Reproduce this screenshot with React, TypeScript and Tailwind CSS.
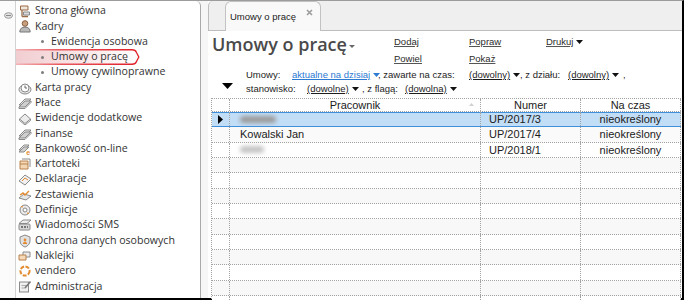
import React from "react";

type IconName =
  | "home"
  | "person"
  | "clock"
  | "bills"
  | "book"
  | "ebank"
  | "boxes"
  | "paper"
  | "chart"
  | "gear"
  | "sms"
  | "shield"
  | "stickers"
  | "vendero"
  | "admin";

type NavItem = { label: string; icon?: IconName; sub?: boolean; active?: boolean };

const NAV: NavItem[] = [
  { label: "Strona główna", icon: "home" },
  { label: "Kadry", icon: "person" },
  { label: "Ewidencja osobowa", sub: true },
  { label: "Umowy o pracę", sub: true, active: true },
  { label: "Umowy cywilnoprawne", sub: true },
  { label: "Karta pracy", icon: "clock" },
  { label: "Płace", icon: "bills" },
  { label: "Ewidencje dodatkowe", icon: "book" },
  { label: "Finanse", icon: "bills" },
  { label: "Bankowość on-line", icon: "ebank" },
  { label: "Kartoteki", icon: "boxes" },
  { label: "Deklaracje", icon: "paper" },
  { label: "Zestawienia", icon: "chart" },
  { label: "Definicje", icon: "gear" },
  { label: "Wiadomości SMS", icon: "sms" },
  { label: "Ochrona danych osobowych", icon: "shield" },
  { label: "Naklejki", icon: "stickers" },
  { label: "vendero", icon: "vendero" },
  { label: "Administracja", icon: "admin" },
];

type Row = { name?: string; blur?: number; numer: string; czas: string; selected?: boolean };

const ROWS: Row[] = [
  { blur: 36, numer: "UP/2017/3", czas: "nieokreślony", selected: true },
  { name: "Kowalski Jan", numer: "UP/2017/4", czas: "nieokreślony" },
  { blur: 24, numer: "UP/2018/1", czas: "nieokreślony" },
];

const EMPTY_ROWS = 10;

// small greyish module icons, drawn roughly like the desktop app ones
function NavIcon({ name }: { name: IconName }) {
  const g = "#8a8a8a";
  const f = "#dcdcdc";
  const o = "#e38b2f";
  switch (name) {
    case "home":
      return (
        <svg width="14" height="14" viewBox="0 0 14 14">
          <path d="M2.5 2h7.5v4H2.5z" fill="#efe6dc" stroke="#9b6b47" />
          <path d="M4 6v6.5M4 12.5h6" stroke="#9b6b47" strokeWidth="1.3" fill="none" />
          <path d="M5.5 8h6v3h-6z" fill={f} stroke={g} />
        </svg>
      );
    case "person":
      return (
        <svg width="14" height="14" viewBox="0 0 14 14">
          <circle cx="7" cy="4.5" r="2.8" fill="#c9a07e" stroke="#8a5f40" />
          <path d="M1.8 13c0-3.3 2.2-5 5.2-5s5.2 1.7 5.2 5z" fill="#b9b9b9" stroke="#777" />
        </svg>
      );
    case "clock":
      return (
        <svg width="14" height="14" viewBox="0 0 14 14">
          <ellipse cx="7" cy="8.5" rx="6" ry="4.5" fill="#e6e6e6" stroke={g} />
          <circle cx="7" cy="7" r="4" fill="#fff" stroke={g} />
          <path d="M7 4.5V7h2" stroke="#666" fill="none" />
        </svg>
      );
    case "bills":
      return (
        <svg width="14" height="14" viewBox="0 0 14 14">
          <path d="M1 9l6-6h6l-6 6z" fill="#e4e4e4" stroke={g} />
          <path d="M1 11l6-6h6l-6 6z" fill="#cfcfcf" stroke={g} />
          <path d="M1 11v1.5h6l6-6V5" fill="none" stroke={g} />
        </svg>
      );
    case "book":
      return (
        <svg width="14" height="14" viewBox="0 0 14 14">
          <path d="M1.5 8L7 3l5.5 5L7 12.5z" fill="#ececec" stroke={g} />
          <path d="M1.5 8v1.5L7 14l5.5-4.5V8" fill="none" stroke={g} />
        </svg>
      );
    case "ebank":
      return (
        <svg width="14" height="14" viewBox="0 0 14 14">
          <path d="M1 8l5-5h5l-5 5z" fill="#e4e4e4" stroke={g} />
          <path d="M1 10l5-5h5l-5 5z" fill="#cfcfcf" stroke={g} />
          <circle cx="10.5" cy="10.5" r="3" fill="#fff" />
          <text x="8.3" y="13" fontSize="7" fontWeight="700" fill={o} fontFamily="Arial">e</text>
        </svg>
      );
    case "boxes":
      return (
        <svg width="14" height="14" viewBox="0 0 14 14">
          <path d="M2 4h8v8H2z" fill="#f3d6b4" stroke="#b9824e" />
          <path d="M4 2h8v8" fill="none" stroke={g} />
          <path d="M2 7h8" stroke="#b9824e" />
        </svg>
      );
    case "paper":
      return (
        <svg width="14" height="14" viewBox="0 0 14 14">
          <path d="M1 9l6-6 6 4-6 6z" fill="#f1f1f1" stroke={g} />
          <path d="M4 9l3-3 3 2" fill="none" stroke={o} />
        </svg>
      );
    case "chart":
      return (
        <svg width="14" height="14" viewBox="0 0 14 14">
          <path d="M1 10l5-4 7 2-5 4z" fill="#e6e6e6" stroke={g} />
          <path d="M2 7l3-2 2 2 4-4" fill="none" stroke={o} strokeWidth="1.4" />
        </svg>
      );
    case "gear":
      return (
        <svg width="14" height="14" viewBox="0 0 14 14">
          <circle cx="7" cy="7" r="5" fill="#ececec" stroke={g} />
          <circle cx="7" cy="7" r="2" fill="#fff" stroke={g} />
          <path d="M3 3.5l2 .5M11 10.5l-2-.5" stroke={o} strokeWidth="1.2" />
        </svg>
      );
    case "sms":
      return (
        <svg width="14" height="14" viewBox="0 0 14 14">
          <path d="M1 5.5L5 2h8L9 5.5z" fill="#ededed" stroke={g} />
          <rect x="1" y="6" width="11" height="6" rx="1" fill="#d7d7d7" stroke={g} />
          <path d="M3 9h7" stroke="#555" strokeWidth="1.5" strokeDasharray="2 1" />
        </svg>
      );
    case "shield":
      return (
        <svg width="14" height="14" viewBox="0 0 14 14">
          <path d="M7 1l5 2v4c0 3-2.5 5.3-5 6-2.5-.7-5-3-5-6V3z" fill="#e2e2e2" stroke={g} />
          <circle cx="7" cy="6" r="1.4" fill={o} />
          <path d="M4.8 10c.3-1.5 1.1-2.3 2.2-2.3s1.9.8 2.2 2.3z" fill={o} />
        </svg>
      );
    case "stickers":
      return (
        <svg width="14" height="14" viewBox="0 0 14 14">
          <path d="M5 3h7v5H5z" fill="#ececec" stroke={g} />
          <path d="M1 6h7v5H1z" fill="#f6d9b8" stroke="#b9824e" />
        </svg>
      );
    case "vendero":
      return (
        <svg width="14" height="14" viewBox="0 0 14 14">
          <circle cx="7" cy="7" r="4.6" fill="none" stroke={o} strokeWidth="2" strokeDasharray="4 1.4" />
        </svg>
      );
    case "admin":
      return (
        <svg width="14" height="14" viewBox="0 0 14 14">
          <rect x="1.5" y="3" width="9" height="10" fill="#f0f0f0" stroke={g} />
          <path d="M3.5 6.5h5M3.5 9h4" stroke="#aaa" />
          <path d="M7 9l5.5-6.5" stroke="#777" strokeWidth="1.6" />
        </svg>
      );
  }
}

function Caret({ color = "#111" }: { color?: string }) {
  return (
    <svg width="7" height="4" viewBox="0 0 7 4" className="inline-block ml-[3px] mb-[1px]">
      <path d="M0 0h7L3.5 4z" fill={color} />
    </svg>
  );
}

function ActiveMarker() {
  return (
    <svg width="124" height="16" viewBox="0 0 124 16" className="absolute left-0 top-[-0.5px] pointer-events-none">
      <defs>
        <linearGradient id="hlFill" x1="0" x2="1" y1="0" y2="0">
          <stop offset="0" stopColor="#f1cdd0" />
          <stop offset="0.6" stopColor="#fae9ea" />
          <stop offset="1" stopColor="#ffffff" />
        </linearGradient>
        <linearGradient id="hlStroke" x1="0" x2="1" y1="0" y2="0">
          <stop offset="0" stopColor="#f2b4b8" />
          <stop offset="0.35" stopColor="#e8595f" />
          <stop offset="1" stopColor="#e01e26" />
        </linearGradient>
      </defs>
      <path
        d="M0 0.75H116Q119.5 0.75 120.5 3.5L122.8 8L120.5 12.5Q119.5 15.25 116 15.25H0"
        fill="url(#hlFill)"
        stroke="url(#hlStroke)"
        strokeWidth="1.3"
      />
    </svg>
  );
}

function Sidebar() {
  return (
    <aside className="w-[201px] h-full flex bg-white border-r border-[#a9a9a9] rounded-tr-[5px] font-['Open_Sans',sans-serif] text-[10.6px] text-[#333]">
      {/* left pin strip */}
      <div className="w-[16px] border-r border-[#d2d2d2] bg-[#fbfbfb] pt-[11px] pl-[4px]">
        <svg width="9" height="7" viewBox="0 0 9 7">
          <ellipse cx="4.5" cy="3.5" rx="4" ry="2.8" fill="#e2e2e2" stroke="#9a9a9a" />
          <path d="M2 3.5h5" stroke="#888" />
        </svg>
      </div>
      <ul className="flex-1 flex flex-col pt-[2.5px]">
        {NAV.map((item) => (
          <li
            key={item.label}
            className={`relative h-[15.3px] flex items-center whitespace-nowrap ${item.sub ? "pl-[25px]" : "pl-[2px]"}`}
          >
            {item.active && <ActiveMarker />}
            {item.sub ? (
              <>
                <span className="relative w-[3px] h-[3px] rounded-full bg-[#7d7d7d]" />
                <span className="relative ml-[7px]">{item.label}</span>
              </>
            ) : (
              <>
                <span className="w-[14px] h-[14px] flex">{item.icon && <NavIcon name={item.icon} />}</span>
                <span className="ml-[3px]">{item.label}</span>
              </>
            )}
          </li>
        ))}
      </ul>
    </aside>
  );
}

function ActionLink({ children }: { children: React.ReactNode }) {
  return <span className="underline underline-offset-[1px] decoration-[#555] text-[#2b2b2b]">{children}</span>;
}

function FilterLink({ children, blue }: { children: React.ReactNode; blue?: boolean }) {
  return (
    <span className={`whitespace-nowrap ${blue ? "text-[#2d7ad3]" : "text-[#1d1d1d]"}`}>
      <span className="underline underline-offset-[1px]">{children}</span>
      <Caret color={blue ? "#2d7ad3" : "#111"} />
    </span>
  );
}

const COLS = "grid grid-cols-[18px_251px_100px_100px]";
const CELL = "border-r border-dotted border-[#a3a3a3]";

function DataTable() {
  return (
    <div className="ml-[-1px] w-[470px] border-l border-t border-dotted border-[#a3a3a3] font-['Liberation_Sans',Arial,sans-serif] text-[11px] text-[#1b1b1b]">
      <div className={`${COLS} h-[13px] leading-[12px] border-b border-dotted border-[#a3a3a3]`}>
        <div className={CELL} />
        <div className={`${CELL} relative text-center`}>
          Pracownik
          <svg width="5" height="3" viewBox="0 0 5 3" className="absolute right-[6px] top-[4px]">
            <path d="M0 3L2.5 0 5 3z" fill="#d0d0d0" />
          </svg>
        </div>
        <div className={`${CELL} text-center`}>Numer</div>
        <div className={`${CELL} text-center`}>Na czas</div>
      </div>
      {ROWS.map((r, i) => (
        <div
          key={r.numer}
          className={`${COLS} h-[15.33px] leading-[14px] ${
            r.selected
              ? "bg-[#c2ddf6] border-b border-[#3f8fdb] shadow-[inset_0_1px_0_#3f8fdb]"
              : `border-b border-dotted border-[#a3a3a3] ${i % 2 ? "bg-[#fafafa]" : "bg-white"}`
          }`}
        >
          <div className={`${CELL} flex items-center pl-[6px]`}>
            {r.selected && (
              <svg width="5" height="9" viewBox="0 0 5 9">
                <path d="M0 0l5 4.5L0 9z" fill="#000" />
              </svg>
            )}
          </div>
          <div className={`${CELL} flex items-center pl-[10px]`}>
            {r.name ? (
              r.name
            ) : (
              <span
                className={`h-[7px] rounded-full blur-[2px] ${r.blur && r.blur > 30 ? "bg-[#9a9a9a]" : "bg-[#c4c4c4]"}`}
                style={{ width: r.blur }}
              />
            )}
          </div>
          <div className={`${CELL} pl-[8px]`}>{r.numer}</div>
          <div className={`${CELL} text-center`}>{r.czas}</div>
        </div>
      ))}
      {Array.from({ length: EMPTY_ROWS }).map((_, i) => (
        <div
          key={i}
          className={`${COLS} h-[15.33px] border-b border-dotted border-[#a3a3a3] ${(i + ROWS.length) % 2 ? "bg-[#f8f8f8]" : "bg-white"}`}
        >
          <div className={CELL} />
          <div className={CELL} />
          <div className={CELL} />
          <div className={CELL} />
        </div>
      ))}
    </div>
  );
}

function Main() {
  return (
    <section className="flex-1 flex flex-col bg-white min-w-0">
      {/* TAB STRIP */}
      <div className="h-[32px] flex items-end pl-[16px] bg-[#efefef] border-b border-l border-[#bdbdbd] rounded-tl-[5px] font-['Liberation_Sans',Arial,sans-serif]">
        <div className="h-[30px] w-[96px] mb-[-1px] flex items-start pl-[4px] pr-[7px] bg-[#f9f9f9] border border-b-0 border-[#c2c2c2] rounded-t-[6px]">
          <span className="mt-[9px] text-[9.5px] leading-[12px] text-[#222]">Umowy o pracę</span>
          <svg width="7" height="7" viewBox="0 0 7 7" className="ml-auto mt-[7px]">
            <path d="M1 1l5 5M6 1L1 6" stroke="#9a9a9a" strokeWidth="1.5" />
          </svg>
        </div>
      </div>

      <div className="flex-1 flex flex-col pl-[4px]">
        {/* TITLE + ACTIONS */}
        <div className="h-[37px] flex pt-[2px] font-['Liberation_Sans',Arial,sans-serif] text-[9.5px]">
          <div className="w-[182px] flex items-center h-[22px]">
            <span className="font-['Open_Sans',sans-serif] font-semibold text-[18px] leading-[22px] text-[#4a4a4a] whitespace-nowrap">
              Umowy o pracę
            </span>
            <svg width="6" height="3" viewBox="0 0 6 3" className="ml-[2px] mt-[4px]">
              <path d="M0 0h6L3 3z" fill="#666" />
            </svg>
          </div>
          <div className="grid grid-cols-[75px_77px_60px] leading-[14px] pt-[2px]">
            <ActionLink>Dodaj</ActionLink>
            <ActionLink>Popraw</ActionLink>
            <span className="whitespace-nowrap">
              <ActionLink>Drukuj</ActionLink>
              <Caret />
            </span>
            <ActionLink>Powiel</ActionLink>
            <ActionLink>Pokaż</ActionLink>
            <span />
          </div>
        </div>

        {/* FILTERS */}
        <div className="h-[30px] flex font-['Liberation_Sans',Arial,sans-serif] text-[9.5px] leading-[14px] text-[#1d1d1d]">
          <div className="w-[34px] pl-[10px] pt-[15px]">
            <svg width="11" height="6" viewBox="0 0 11 6">
              <path d="M0 0h11L5.5 6z" fill="#000" />
            </svg>
          </div>
          <div className="flex flex-col">
            <div className="flex whitespace-nowrap">
              <span className="w-[46px]">Umowy:</span>
              <span className="w-[86px]">
                <FilterLink blue>aktualne na dzisiaj</FilterLink>
              </span>
              <span className="w-[91px]">, zawarte na czas:</span>
              <span className="w-[51px]">
                <FilterLink>(dowolny)</FilterLink>
              </span>
              <span className="w-[48px]">, z działu:</span>
              <span className="w-[55px]">
                <FilterLink>(dowolny)</FilterLink>
              </span>
              <span>,</span>
            </div>
            <div className="flex whitespace-nowrap">
              <span className="w-[61px]">stanowisko:</span>
              <span className="w-[55px]">
                <FilterLink>(dowolne)</FilterLink>
              </span>
              <span className="w-[43px]">, z flagą:</span>
              <FilterLink>(dowolna)</FilterLink>
            </div>
          </div>
        </div>

        <DataTable />
      </div>
    </section>
  );
}

export default function App() {
  return (
    <div className="w-[684px] h-[300px] overflow-hidden bg-white">
      <div className="h-full flex border-t border-[#9c9c9c] border-r-2 border-b-2 border-r-black border-b-black bg-[#f6f6f6]">
        <Sidebar />
        <div className="w-[7px]" />
        <Main />
      </div>
    </div>
  );
}
